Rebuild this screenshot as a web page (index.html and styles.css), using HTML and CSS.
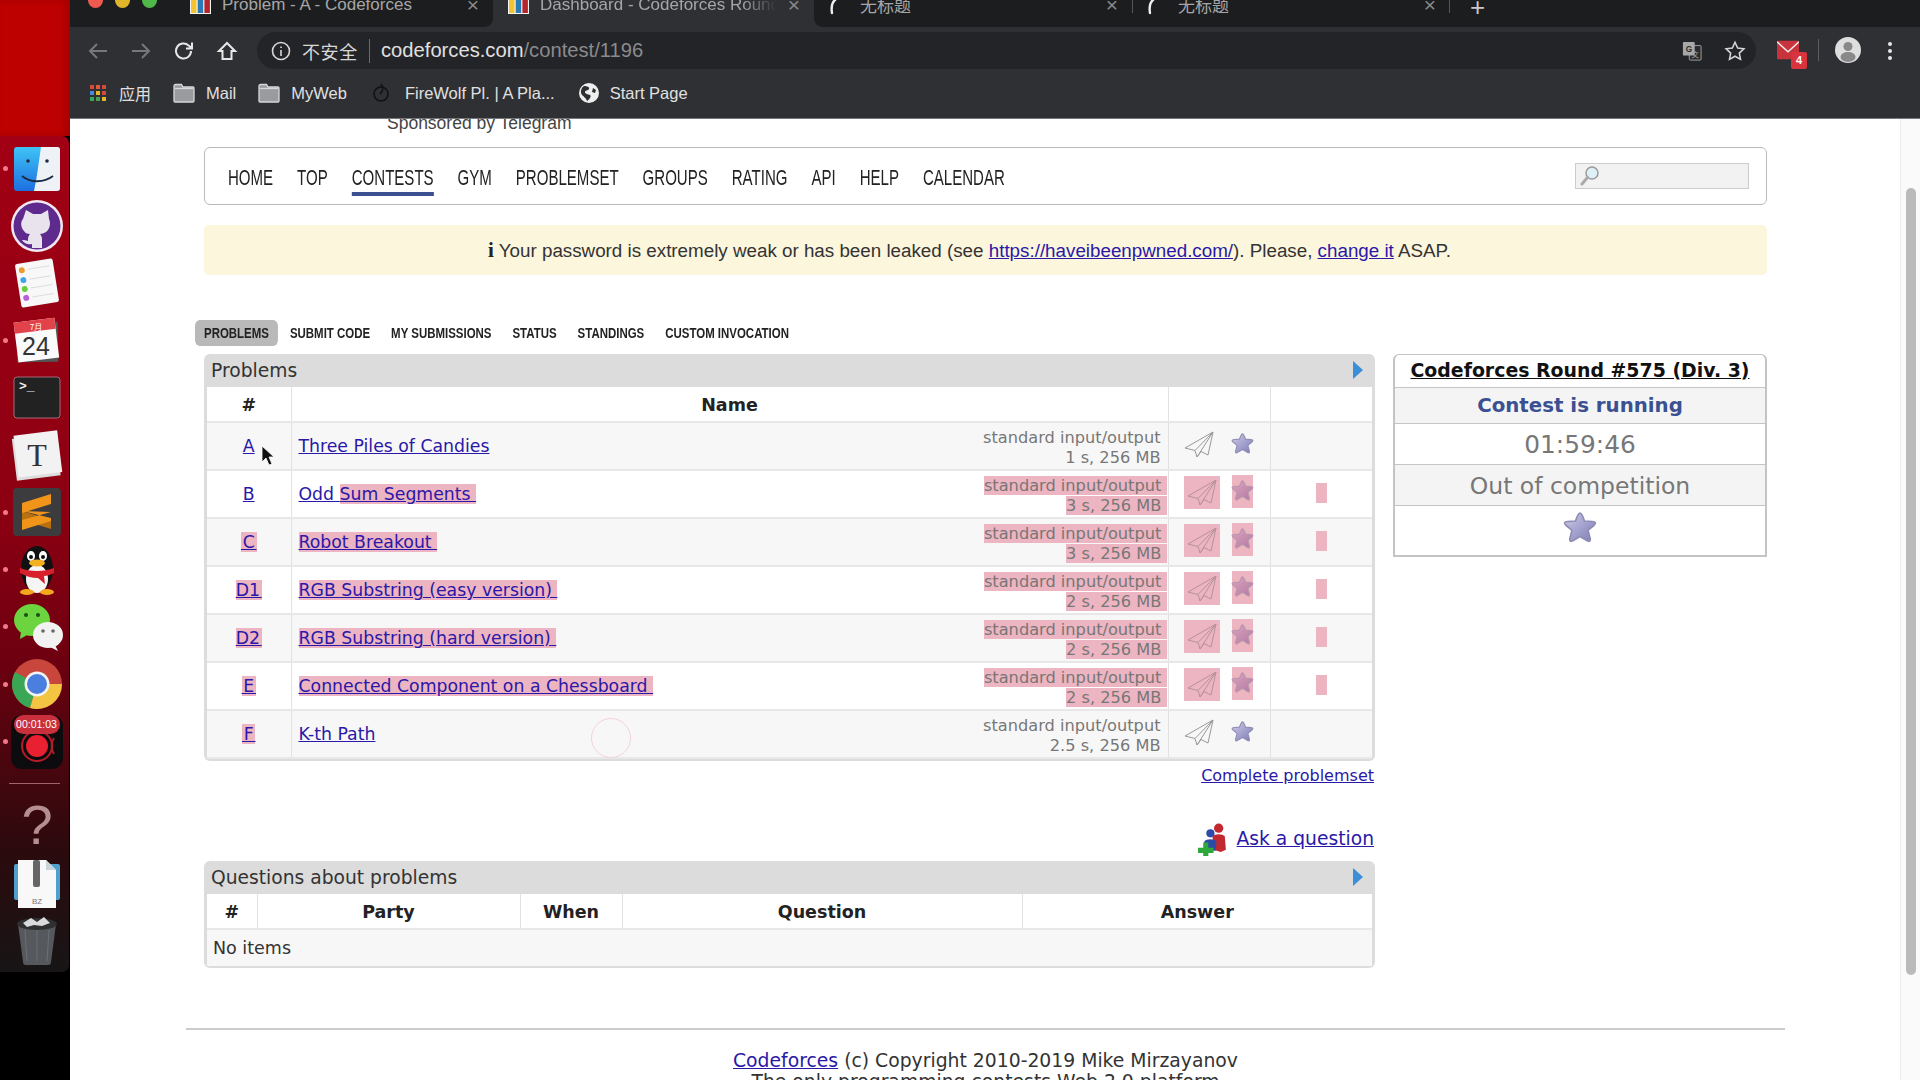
FILE: index.html
```html
<!DOCTYPE html>
<html lang="en">
<head>
<meta charset="utf-8">
<title>Dashboard - Codeforces Round #575 (Div. 3)</title>
<link rel="stylesheet" href="styles.css">
</head>
<body>
<svg class="defs" width="0" height="0" aria-hidden="true">
  <defs>
    <linearGradient id="starGrad" x1="0" y1="0" x2="1" y2="1"><stop offset="0" stop-color="#cfcde6"/><stop offset=".5" stop-color="#a5a3cf"/><stop offset="1" stop-color="#7f7cb4"/></linearGradient>
    <linearGradient id="starPink" x1="0" y1="0" x2="1" y2="1"><stop offset="0" stop-color="#dba6bf"/><stop offset=".5" stop-color="#c78fb0"/><stop offset="1" stop-color="#b07a9e"/></linearGradient>
    <linearGradient id="dockFinder" x1="0" y1="0" x2="0" y2="1"><stop offset="0" stop-color="#3fc4f5"/><stop offset="1" stop-color="#1c6fe0"/></linearGradient>
    <symbol id="star" viewBox="0 0 24 24"><path d="M12 2.500c.8 0 1.400 1 2.700 4.700l4.900.3c1.700.2 2.200 1 1 2.100l-3.800 3.200 1.300 4.900c.4 1.600-.4 2.200-1.800 1.300L12 16.500l-4.300 2.500c-1.400.9-2.200.3-1.800-1.300l1.300-4.900-3.800-3.200c-1.200-1.100-.7-1.900 1-2.100l4.900-.3C10.600 3.500 11.200 2.500 12 2.500z"/></symbol>
    <symbol id="plane" viewBox="0 0 30 27"><path d="M29 1 1 17l10 2.500L13 26l4-5.500 7 3.500zM29 1 11 19.500M29 1 13 26" fill="none" stroke="currentColor" stroke-width="1" stroke-linejoin="round"/></symbol>
    <symbol id="favicon" viewBox="0 0 21 24"><rect width="21" height="24" fill="#f4f4f4"/><rect x="1" y="8" width="5.500" height="15" fill="#f4c430"/><rect x="7.700" y="0" width="5.500" height="23" fill="#2a7ab8"/><rect x="14.400" y="4" width="5.500" height="19" fill="#b4252c"/></symbol>
    <symbol id="folder" viewBox="0 0 22 20"><path d="M1 3a1.500 1.500 0 0 1 1.500-1.500h6L10 4h10a1 1 0 0 1 1 1v13a1 1 0 0 1-1 1H2a1 1 0 0 1-1-1z" fill="#9a9b9e" stroke="#d7d7d9" stroke-width="1.300"/><path d="M2 5.500h18" stroke="#d7d7d9" stroke-width="1.300"/></symbol>
    <symbol id="spin" viewBox="0 0 20 20"><path d="M3 18C2 12 3 7 7 4" fill="none" stroke="#eee" stroke-width="2.400" stroke-linecap="round"/><circle cx="14" cy="3" r="1.400" fill="#eee"/></symbol>
  </defs>
</svg>

<div class="screen">
  <aside class="desk">
    <div class="desk-top"></div>
    <nav class="dock">
      <div class="dock-item"><svg class="dock-icon" viewBox="0 0 56 56"><rect x="5" y="6" width="46" height="44" rx="3" fill="url(#dockFinder)"/><path d="M32 6h16a3 3 0 0 1 3 3v38a3 3 0 0 1-3 3H25c3-14 5-30 7-44z" fill="#eef2f6"/><circle cx="19" cy="20" r="1.800" fill="#1d2b45"/><circle cx="38" cy="20" r="1.800" fill="#1d2b45"/><path d="M13 35c8 7 22 7 31 0" fill="none" stroke="#1d2b45" stroke-width="1.800"/></svg><span class="dot"></span></div>
      <div class="dock-item"><svg class="dock-icon" viewBox="0 0 56 56"><circle cx="28" cy="28" r="26" fill="#f1e8f2"/><circle cx="28" cy="28" r="23.500" fill="#5e2a8e"/><path d="M17 12l7 4h8l7-4 1 9c2 4 1 10-3 13-2 1-4 2-6 2 1 1 2 3 2 5v9h-10v-4c-5 1-8-1-10-4 2 0 4 0 6 1v-2c0-2 1-4 2-5-3 0-5-1-6-3-3-3-4-9-1-12z" fill="#e9e3ee"/></svg></div>
      <div class="dock-item"><svg class="dock-icon" viewBox="0 0 56 56"><g transform="rotate(-9 28 28)"><rect x="9" y="6" width="38" height="44" rx="2" fill="#f8f8f8"/><g stroke="#ddd"><path d="M21 13h22M21 23h22M21 32h22M21 41h22"/></g><circle cx="15" cy="13" r="3" fill="#ef9a2e"/><circle cx="15" cy="23" r="3" fill="#3ca7e8"/><circle cx="15" cy="32" r="3" fill="#65d03e"/><circle cx="15" cy="41" r="3" fill="#b65fd8"/></g></svg></div>
      <div class="dock-item"><svg class="dock-icon" viewBox="0 0 56 56"><g transform="rotate(-7 28 28)"><rect x="8" y="9" width="41" height="40" fill="#555" transform="rotate(6 28 28)"/><rect x="7" y="7" width="41" height="40" fill="#fafafa"/><rect x="7" y="7" width="41" height="11" fill="#e2434b"/></g><text x="27" y="17" class="cal-month">7月</text><text x="27" y="42" class="cal-day">24</text></svg><span class="dot"></span></div>
      <div class="dock-item"><svg class="dock-icon" viewBox="0 0 56 56"><rect x="5" y="7" width="46" height="41" rx="3" fill="#222" stroke="#a36a75"/><text x="10" y="20" class="term">&gt;_</text></svg></div>
      <div class="dock-item"><svg class="dock-icon" viewBox="0 0 56 56"><rect x="5" y="9" width="44" height="42" fill="#ddd" transform="rotate(-7 28 28)"/><rect x="7" y="6" width="44" height="42" fill="#f2f2f2" transform="rotate(-7 28 28)"/><text x="28" y="39" class="typora">T</text></svg></div>
      <div class="dock-item"><svg class="dock-icon" viewBox="0 0 56 56"><rect x="4" y="4" width="48" height="48" rx="4" fill="#3c3c3e"/><path d="M13 27l29 9v9L13 36z" fill="#b9700f"/><path d="M13 19 42 10v10L13 29z" fill="#f0941a"/><path d="M13 27l29 7v3L13 46V36l29-8z" fill="#f0941a"/></svg><span class="dot"></span></div>
      <div class="dock-item"><svg class="dock-icon" viewBox="0 0 56 56"><ellipse cx="28" cy="27" rx="16" ry="23" fill="#111"/><ellipse cx="28" cy="37" rx="11" ry="14" fill="#f5f5f5"/><ellipse cx="22" cy="14" rx="4" ry="5" fill="#fff"/><ellipse cx="34" cy="14" rx="4" ry="5" fill="#fff"/><circle cx="22" cy="15" r="2" fill="#111"/><circle cx="34" cy="15" r="2" fill="#111"/><ellipse cx="28" cy="21" rx="8" ry="3.500" fill="#f4b01e"/><path d="M11 26c10 4 24 4 34 0v5c-4 2-7 3-10 3l1 8-7-6c-6 0-13-2-18-5z" fill="#d8202c"/><ellipse cx="18" cy="50" rx="7" ry="3" fill="#f4a81e"/><ellipse cx="38" cy="50" rx="7" ry="3" fill="#f4a81e"/></svg><span class="dot"></span></div>
      <div class="dock-item"><svg class="dock-icon" viewBox="0 0 56 56"><ellipse cx="23" cy="21" rx="18" ry="16" fill="#6bd43e"/><path d="M12 32l-1 8 9-5z" fill="#6bd43e"/><circle cx="17" cy="16" r="2" fill="#17501a"/><circle cx="29" cy="16" r="2" fill="#17501a"/><ellipse cx="39" cy="36" rx="15" ry="13" fill="#f2f2f2"/><path d="M46 46l3 6-8-4z" fill="#f2f2f2"/><circle cx="34" cy="32" r="1.800" fill="#666"/><circle cx="44" cy="32" r="1.800" fill="#666"/></svg><span class="dot"></span></div>
      <div class="dock-item"><svg class="dock-icon" viewBox="0 0 56 56"><circle cx="28" cy="28" r="25" fill="#c9463d"/><path d="M28 28 6 16A25 25 0 0 0 21 52z" fill="#3aa757"/><path d="M28 28h25a25 25 0 0 1-32 24z" fill="#f4c542"/><circle cx="28" cy="28" r="12.500" fill="#f4f4f4"/><circle cx="28" cy="28" r="10" fill="#4a7fe0"/></svg><span class="dot"></span></div>
      <div class="dock-item"><div class="rec"><svg class="rec-art" viewBox="0 0 52 54"><rect width="52" height="54" rx="11" fill="#0c0c0e"/><circle cx="26" cy="31" r="11" fill="#e8202f"/><circle cx="26" cy="31" r="15" fill="none" stroke="#b51c28" stroke-width="2"/><path d="M43 23c-3 4-3 12 0 16" fill="none" stroke="#b51c28" stroke-width="2"/></svg><span class="rec-time">00:01:03</span></div><span class="dot"></span></div>
      <hr class="dock-sep">
      <div class="dock-item"><svg class="dock-icon" viewBox="0 0 56 56"><text x="28" y="47" class="help">?</text></svg></div>
      <div class="dock-item"><svg class="dock-icon low" viewBox="0 0 56 56"><rect x="5" y="6" width="46" height="36" rx="2" fill="#4f9fcf"/><path d="M9 2h28l10 10v38H9z" fill="#f8f8f8"/><path d="M37 2v10h10z" fill="#c9d3da"/><rect x="24" y="2" width="7" height="27" rx="2" fill="#666"/><text x="28" y="46" class="bz">BZ</text></svg></div>
      <div class="dock-item"><svg class="dock-icon" viewBox="0 0 56 56"><path d="M9 12h38l-5 38a3 3 0 0 1-3 3H17a3 3 0 0 1-3-3z" fill="#55585c"/><path d="M16 18l2 31M28 18v31M40 18l-2 31" stroke="#6d7074"/><ellipse cx="28" cy="12" rx="20" ry="6" fill="#2e3032"/><path d="M14 11l8-5 6 4 7-5 6 6-8 3-8-1-7 2z" fill="#d8dadc"/></svg></div>
    </nav>
    <div class="desk-bottom"></div>
  </aside>

  <div class="browser">
    <header class="chrome">
      <div class="tabbar">
        <div class="lights"><i class="light red"></i><i class="light yellow"></i><i class="light green"></i></div>
        <div class="tab"><svg class="fav"><use href="#favicon"/></svg><span class="tab-title">Problem - A - Codeforces</span><span class="tab-x">×</span></div>
        <div class="tab active"><svg class="fav"><use href="#favicon"/></svg><span class="tab-title fade">Dashboard - Codeforces Round</span><span class="tab-x">×</span></div>
        <div class="tab"><svg class="fav spinner"><use href="#spin"/></svg><span class="tab-title cjk">无标题</span><span class="tab-x">×</span></div>
        <div class="tab sep"><svg class="fav spinner"><use href="#spin"/></svg><span class="tab-title cjk">无标题</span><span class="tab-x">×</span></div>
        <span class="tab-plus">+</span>
      </div>
      <div class="toolbar">
        <div class="nav-btns">
          <svg class="tool dim" viewBox="0 0 24 24"><path d="M21 12H4M11 5l-7 7 7 7"/></svg>
          <svg class="tool dim" viewBox="0 0 24 24"><path d="M3 12h17M13 5l7 7-7 7"/></svg>
          <svg class="tool" viewBox="0 0 24 24"><path d="M19 12a7.500 7.500 0 1 1-2.300-5.400L20 9.500M20 3.500v6h-6"/></svg>
          <svg class="tool" viewBox="0 0 24 24"><path d="M12 4 4 12h3.500v8h9v-8H20z"/></svg>
        </div>
        <div class="omnibox">
          <svg class="info" viewBox="0 0 20 20"><circle cx="10" cy="10" r="8.500"/><path d="M10 9v6M10 5.500v1.500"/></svg>
          <span class="insecure cjk">不安全</span>
          <span class="url"><b>codeforces.com</b>/contest/1196</span>
          <svg class="translate" viewBox="0 0 22 22"><rect x="8" y="5" width="13" height="16" rx="1" fill="#2a2b2e" stroke="#a8a8a8"/><rect x="1" y="1" width="13" height="15" rx="1" fill="#a8a8a8"/><text x="7.500" y="12" class="gt">G</text><text x="14.500" y="18" class="gt2">文</text></svg>
          <svg class="ostar" viewBox="0 0 24 24"><path d="M12 2.500l2.900 6.300 6.800.8-5 4.700 1.300 6.800-6-3.400-6 3.400 1.300-6.800-5-4.700 6.800-.8z"/></svg>
        </div>
        <div class="ext">
          <svg class="gmail" viewBox="0 0 24 20"><rect width="24" height="20" rx="1" fill="#c9333b"/><path d="M0 1l12 11L24 1" fill="none" stroke="#eee" stroke-width="1.600"/></svg>
          <span class="ext-badge">4</span>
        </div>
        <span class="ext-sep"></span>
        <svg class="avatar" viewBox="0 0 26 26"><circle cx="13" cy="13" r="13" fill="#dedede"/><circle cx="13" cy="9.500" r="4.500" fill="#888"/><ellipse cx="13" cy="20" rx="7.500" ry="5" fill="#888"/></svg>
        <span class="kebab"><i></i><i></i><i></i></span>
      </div>
      <div class="bookmarks">
        <span class="apps"><i class="c1"></i><i class="c2"></i><i class="c3"></i><i class="c4"></i><i class="c5"></i><i class="c6"></i><i class="c7"></i><i class="c8"></i><i class="c9"></i></span>
        <span class="bm cjk bm-apps">应用</span>
        <svg class="bm-folder"><use href="#folder"/></svg><span class="bm">Mail</span>
        <svg class="bm-folder"><use href="#folder"/></svg><span class="bm">MyWeb</span>
        <svg class="bm-wolf" viewBox="0 0 16 20"><circle cx="8" cy="11" r="7" fill="none" stroke="#111" stroke-width="1.600"/><path d="M8 1c3 3 2 7-1 10" fill="none" stroke="#111" stroke-width="1.600"/></svg><span class="bm">FireWolf Pl. | A Pla...</span>
        <svg class="bm-globe" viewBox="0 0 20 20"><circle cx="10" cy="10" r="10" fill="#eee"/><path d="M5 3c3 0 6 1 5 3S6 7 6 9s3 2 5 3-1 5-3 6c-1-3-3-4-5-6C1 9 2 5 5 3zM14 5l3 2-1 3-3-1z" fill="#2e2f33"/></svg><span class="bm">Start Page</span>
      </div>
    </header>

    <div class="viewport">
      <main class="content">
        <div class="site">
          <div class="sponsor">Sponsored by Telegram</div>
          <div class="menu">
            <div class="menu-links">
              <a class="menu-item">HOME</a><a class="menu-item">TOP</a><a class="menu-item current">CONTESTS</a><a class="menu-item">GYM</a><a class="menu-item">PROBLEMSET</a><a class="menu-item">GROUPS</a><a class="menu-item">RATING</a><a class="menu-item">API</a><a class="menu-item">HELP</a><a class="menu-item">CALENDAR</a>
            </div>
            <div class="search"><svg class="lens" viewBox="0 0 20 22"><circle cx="12" cy="8" r="6" fill="#dff1f8" stroke="#9a9a9a" stroke-width="1.500"/><path d="M7.500 12.500 2 19" stroke="#aaa" stroke-width="3" stroke-linecap="round"/></svg></div>
          </div>
          <div class="alert"><b class="alert-i">i</b> Your password is extremely weak or has been leaked (see <a class="link">https://haveibeenpwned.com/</a>). Please, <a class="link">change it</a> ASAP.</div>
          <div class="subnav">
            <a class="sub current">PROBLEMS</a><a class="sub">SUBMIT CODE</a><a class="sub">MY SUBMISSIONS</a><a class="sub">STATUS</a><a class="sub">STANDINGS</a><a class="sub">CUSTOM INVOCATION</a>
          </div>

          <div class="columns">
            <section class="left">
              <div class="panel">
                <div class="panel-head">Problems<span class="tri"></span></div>
                <table class="grid">
                  <colgroup><col class="p1"><col class="p2"><col class="p3"><col class="p4"></colgroup>
                  <thead><tr><th>#</th><th>Name</th><th></th><th></th></tr></thead>
                  <tbody>
                    <tr><td class="idx"><a class="link">A</a></td><td><div class="name"><a class="link">Three Piles of Candies</a><div class="limits"><span>standard input/output</span><span>1 s, 256 MB</span></div></div></td><td><div class="acts"><span class="act-plane"><svg class="plane"><use href="#plane"/></svg></span><span class="act-star"><svg class="star"><use href="#star"/></svg></span></div></td><td></td></tr>
                    <tr><td class="idx"><a class="link">B</a></td><td><div class="name"><a class="link">Odd <mark>Sum Segments&nbsp;</mark></a><div class="limits on"><span><mark>standard input/output&nbsp;</mark></span><span><mark>3 s, 256 MB&nbsp;</mark></span></div></div></td><td><div class="acts on"><span class="act-plane"><svg class="plane"><use href="#plane"/></svg></span><span class="act-star"><svg class="star"><use href="#star"/></svg></span></div></td><td class="bar-cell"><span class="bar"></span></td></tr>
                    <tr><td class="idx"><a class="link"><mark>&hairsp;C&hairsp;</mark></a></td><td><div class="name"><a class="link"><mark>Robot Breakout&nbsp;</mark></a><div class="limits on"><span><mark>standard input/output&nbsp;</mark></span><span><mark>3 s, 256 MB&nbsp;</mark></span></div></div></td><td><div class="acts on"><span class="act-plane"><svg class="plane"><use href="#plane"/></svg></span><span class="act-star"><svg class="star"><use href="#star"/></svg></span></div></td><td class="bar-cell"><span class="bar"></span></td></tr>
                    <tr><td class="idx"><a class="link"><mark>D1&hairsp;</mark></a></td><td><div class="name"><a class="link"><mark>RGB Substring (easy version)&nbsp;</mark></a><div class="limits on"><span><mark>standard input/output&nbsp;</mark></span><span><mark>2 s, 256 MB&nbsp;</mark></span></div></div></td><td><div class="acts on"><span class="act-plane"><svg class="plane"><use href="#plane"/></svg></span><span class="act-star"><svg class="star"><use href="#star"/></svg></span></div></td><td class="bar-cell"><span class="bar"></span></td></tr>
                    <tr><td class="idx"><a class="link"><mark>D2&hairsp;</mark></a></td><td><div class="name"><a class="link"><mark>RGB Substring (hard version)&nbsp;</mark></a><div class="limits on"><span><mark>standard input/output&nbsp;</mark></span><span><mark>2 s, 256 MB&nbsp;</mark></span></div></div></td><td><div class="acts on"><span class="act-plane"><svg class="plane"><use href="#plane"/></svg></span><span class="act-star"><svg class="star"><use href="#star"/></svg></span></div></td><td class="bar-cell"><span class="bar"></span></td></tr>
                    <tr><td class="idx"><a class="link"><mark>&hairsp;E&hairsp;</mark></a></td><td><div class="name"><a class="link"><mark>Connected Component on a Chessboard&nbsp;</mark></a><div class="limits on"><span><mark>standard input/output&nbsp;</mark></span><span><mark>2 s, 256 MB&nbsp;</mark></span></div></div></td><td><div class="acts on"><span class="act-plane"><svg class="plane"><use href="#plane"/></svg></span><span class="act-star"><svg class="star"><use href="#star"/></svg></span></div></td><td class="bar-cell"><span class="bar"></span></td></tr>
                    <tr><td class="idx"><a class="link"><mark>&hairsp;F&hairsp;</mark></a></td><td><div class="name"><a class="link">K-th Path</a><div class="limits"><span>standard input/output</span><span>2.5 s, 256 MB</span></div></div></td><td><div class="acts"><span class="act-plane"><svg class="plane"><use href="#plane"/></svg></span><span class="act-star"><svg class="star"><use href="#star"/></svg></span></div></td><td></td></tr>
                  </tbody>
                </table>
              </div>
              <div class="complete"><a class="link">Complete problemset</a></div>
              <div class="ask">
                <svg class="ask-icon" viewBox="0 0 32 34"><circle cx="21" cy="7" r="4.500" fill="#c2282f"/><path d="M15 15c2-3 10-3 12 0l1 13-5 2-7-2z" fill="#c2282f"/><circle cx="13" cy="12" r="4" fill="#2c4aa8"/><path d="M7 20c2-3 10-3 12 0l-1 9H8z" fill="#2c4aa8"/><path d="M6 21h5v5h5v5h-5v3H6v-3H1v-5h5z" fill="#2ea83a"/></svg>
                <a class="link">Ask a question</a>
              </div>
              <div class="panel">
                <div class="panel-head">Questions about problems<span class="tri"></span></div>
                <table class="grid q">
                  <colgroup><col class="q1"><col class="q2"><col class="q3"><col class="q4"><col class="q5"></colgroup>
                  <thead><tr><th>#</th><th>Party</th><th>When</th><th>Question</th><th>Answer</th></tr></thead>
                  <tbody><tr><td colspan="5" class="none">No items</td></tr></tbody>
                </table>
              </div>
            </section>

            <aside class="right">
              <div class="r-title"><a class="r-link">Codeforces Round #575 (Div. 3)</a></div>
              <div class="r-state">Contest is running</div>
              <div class="r-time">01:59:46</div>
              <div class="r-out">Out of competition</div>
              <div class="r-star"><svg class="star big"><use href="#star"/></svg></div>
            </aside>
          </div>

          <span class="ring"></span>
          <svg class="cursor" viewBox="0 0 14 22"><path d="M1 1v16l4-4 3 7 3-1-3-7h5z" fill="#111" stroke="#fff" stroke-width=".8"/></svg>
        </div>
        <footer class="foot">
          <a class="link">Codeforces</a> (c) Copyright 2010-2019 Mike Mirzayanov<br>
          The only programming contests Web 2.0 platform
        </footer>
      </main>
      <div class="scrollbar"><div class="thumb"></div></div>
    </div>
  </div>
</div>
</body>
</html>
```

FILE: styles.css
```css
* { box-sizing: border-box; }
html, body { margin: 0; height: 100%; overflow: hidden; background: #000; }
.defs { position: absolute; }
.cjk { font-family: "Noto Sans CJK SC", "Liberation Sans", sans-serif; }
.screen { display: flex; width: 1920px; height: 1080px; overflow: hidden; }

/* desktop + dock */
.desk { width: 70px; flex: none; display: flex; flex-direction: column; background: #000; }
.desk-top { height: 136px; background: #bd0000; box-shadow: inset -4px 0 6px #a00000; }
.dock { height: 836px; width: 69px; padding-top: 4px; border-radius: 0 7px 7px 0; background: linear-gradient(#a20014 0%, #8c0012 45%, #6f0010 62%, #2c0a0d 85%, #171516 100%); display: flex; flex-direction: column; align-items: center; }
.desk-bottom { flex: 1; background: #000; }
.dock-item { position: relative; width: 69px; height: 57.300px; flex: none; display: flex; align-items: center; justify-content: center; padding-left: 4px; }
.dock-icon { width: 56px; height: 56px; flex: none; }
.dock-icon.low { margin-top: 8px; }
.dot { position: absolute; left: 3px; top: 26px; width: 5px; height: 5px; border-radius: 50%; background: #f0788a; }
.dock-sep { width: 51px; height: 1px; margin: 13px 0 12px; border: 0; background: #a0656b; flex: none; }
.rec { position: relative; width: 52px; height: 54px; }
.rec-art { display: block; width: 52px; height: 54px; }
.rec-time { position: absolute; left: 3px; right: 3px; top: 0; height: 19px; border-radius: 10px; background: #c9303c; color: #fff; font: 10.500px/19px "Liberation Sans", sans-serif; text-align: center; }
.cal-month { font: 8px "Noto Sans CJK SC", sans-serif; fill: #fff; text-anchor: middle; }
.cal-day { font: 25px "Liberation Sans", sans-serif; fill: #333; text-anchor: middle; }
.term { font: bold 13px "Liberation Mono", monospace; fill: #eee; }
.typora { font: 32px "Liberation Serif", serif; fill: #333; text-anchor: middle; }
.help { font: 56px "Liberation Sans", sans-serif; fill: #b58f90; text-anchor: middle; }
.bz { font: 8px "Liberation Sans", sans-serif; fill: #777; text-anchor: middle; }

/* browser chrome */
.browser { flex: 1; min-width: 0; display: flex; flex-direction: column; background: #fff; }
.chrome { height: 119px; flex: none; background: #2f3034; border-bottom: 1px solid #77787b; color: #dcdcdc; font-family: "Liberation Sans", sans-serif; }
.tabbar { height: 27px; display: flex; background: #1c1d1f; overflow: hidden; }
.lights { width: 105px; display: flex; gap: 12px; padding-left: 18px; flex: none; }
.light { width: 15px; height: 15px; margin-top: -7px; border-radius: 50%; }
.red { background: #ee5a52; } .yellow { background: #e0b52a; } .green { background: #4fb848; }
.tab { position: relative; width: 318px; flex: none; display: flex; align-items: flex-start; padding: 0 12px 0 15px; color: #a6a6a8; font-size: 17px; }
.tab.sep::before, .tab.sep::after { content: ""; position: absolute; top: 0; width: 1px; height: 13px; background: #55565a; }
.tab.sep::before { left: 0; } .tab.sep::after { right: 0; }
.tab.active { background: #2f3034; width: 321px; }
.tab.active::before, .tab.active::after { content: ""; position: absolute; bottom: 0; width: 8px; height: 8px; }
.tab.active::before { left: -8px; background: radial-gradient(circle at 0 0, transparent 7.500px, #2f3034 8px); }
.tab.active::after { right: -8px; background: radial-gradient(circle at 100% 0, transparent 7.500px, #2f3034 8px); }
.fav { width: 21px; height: 24px; margin-top: -10px; flex: none; }
.fav.spinner { width: 20px; height: 20px; margin-top: -5px; }
.tab-title { flex: 1; min-width: 0; margin: -4px 0 0 11px; line-height: 18px; white-space: nowrap; overflow: hidden; }
.fade { -webkit-mask-image: linear-gradient(90deg, #000 82%, transparent 96%); mask-image: linear-gradient(90deg, #000 82%, transparent 96%); }
.tab-x { margin-top: -6px; width: 16px; line-height: 22px; font-size: 21px; text-align: center; color: #8a8a8c; }
.tab-plus { margin: -7px 0 0 20px; font-size: 26px; line-height: 28px; color: #c8c8c8; }

.toolbar { height: 48px; display: flex; align-items: flex-start; padding: 5px 0 0 16px; }
.nav-btns { display: flex; gap: 19px; padding-top: 7px; flex: none; }
.tool { width: 24px; height: 24px; fill: none; stroke: #e8e8e8; stroke-width: 2; }
.tool.dim { stroke: #77787b; }
.omnibox { width: 1499px; height: 37px; margin-left: 18px; padding: 0 10px 0 14px; flex: none; display: flex; align-items: center; border-radius: 19px; background: #232427; }
.info { width: 20px; height: 20px; margin-right: 11px; flex: none; fill: none; stroke: #d8d8d8; stroke-width: 1.600; }
.insecure { font-size: 18px; letter-spacing: .6px; color: #d8d8d8; width: 68px; height: 24px; line-height: 24px; border-right: 1px solid #6a6b6e; }
.url { margin-left: 11px; font-size: 20.200px; color: #8a8b8e; }
.url b { font-weight: 400; color: #e0e0e0; }
.translate { width: 20px; height: 20px; margin-left: auto; flex: none; }
.gt { font: bold 9px "Liberation Sans", sans-serif; fill: #2a2b2e; text-anchor: middle; }
.gt2 { font: 8px "Noto Sans CJK SC", sans-serif; fill: #a8a8a8; text-anchor: middle; }
.ostar { width: 22px; height: 22px; margin: 0 0 0 22px; fill: none; stroke: #d6d6d6; stroke-width: 1.700; flex: none; }
.ext { position: relative; width: 30px; margin: 8px 0 0 21px; flex: none; }
.gmail { display: block; width: 22px; height: 20px; }
.ext-badge { position: absolute; left: 14px; top: 12px; width: 16px; height: 17px; border-radius: 2px; background: #d9343d; color: #fff; font: bold 11px/17px "Liberation Sans", sans-serif; text-align: center; }
.ext-sep { width: 1px; height: 22px; margin: 7px 0 0 11px; background: #5c5d60; flex: none; }
.avatar { width: 26px; height: 26px; margin: 5px 0 0 16px; flex: none; }
.kebab { display: flex; flex-direction: column; gap: 3px; margin: 10px 0 0 27px; }
.kebab i { width: 4px; height: 4px; border-radius: 50%; background: #e6e6e6; }

.bookmarks { height: 43px; display: flex; align-items: center; padding: 0 0 7px 20px; }
.apps { display: grid; grid-template-columns: repeat(3, 4px); grid-auto-rows: 4px; gap: 2px; width: 16px; flex: none; }
.apps i { display: block; } .c1,.c3 { background: #d9483b; } .c2 { background: #e05a3a; } .c4 { background: #4a88e0; } .c5 { background: #e8b52a; } .c6 { background: #d9483b; } .c7 { background: #3aa757; } .c8 { background: #4a9f54; } .c9 { background: #e8b52a; }
.bm { font-size: 16.500px; color: #e0e0e0; white-space: nowrap; }
.bm-apps { margin-left: 13px; font-size: 16px; }
.bm-folder { width: 22px; height: 20px; margin-left: 22px; margin-right: 11px; flex: none; }
.bm-wolf { width: 16px; height: 20px; margin-left: 26px; margin-right: 16px; flex: none; }
.bm-globe { width: 20px; height: 20px; margin-left: 24px; margin-right: 11px; flex: none; }

/* page */
.viewport { flex: 1; min-height: 0; display: flex; }
.content { flex: 1; min-width: 0; overflow: hidden; background: #fff; font-family: "DejaVu Sans", Verdana, sans-serif; color: #333; }
.scrollbar { width: 20px; flex: none; padding: 69px 4px 0 5px; background: #fafafa; border-left: 1px solid #ececec; }
.thumb { height: 787px; border-radius: 6px; background: #bababa; }
.site { position: relative; width: 1563px; margin-left: 134px; }
.sponsor { height: 33px; margin: -5px 0 0 183px; font: 17.500px/18px "Liberation Sans", sans-serif; color: #444; }
.menu { height: 58px; display: flex; align-items: flex-start; padding: 0 17px 0 23px; border: 1.500px solid #bbb; border-radius: 6px; }
.menu-links { display: flex; gap: 35px; flex: none; transform: scaleX(.684); transform-origin: left top; }
.menu-item { margin-top: 16px; height: 31.500px; font: 22px/28px "Liberation Sans", sans-serif; color: #222; white-space: nowrap; }
.menu-item.current { border-bottom: 4px solid #3b5091; }
.search { width: 174px; height: 26px; margin: 15px 0 0 auto; background: #f2f2f2; border: 1px solid #ccc; }
.lens { display: block; width: 20px; height: 24px; margin-left: 4px; }
.alert { height: 50px; margin-top: 20px; padding-right: 32px; border-radius: 5px; background: #fcf6dd; text-align: center; font: 18.800px/50px "Liberation Sans", sans-serif; color: #333; }
.alert-i { font-family: "Liberation Serif", serif; font-size: 21px; color: #222; }
.link { color: #2a18a8; text-decoration: underline; }
.subnav { display: flex; gap: 26.600px; margin: 45px 0 8px -9px; height: 26px; transform: scaleX(.79); transform-origin: left top; }
.sub { height: 26px; font: bold 14.500px/26px "Liberation Sans", sans-serif; color: #222; white-space: nowrap; }
.sub.current { padding: 0 11.400px; margin-right: -11.400px; border-radius: 6px; background: #b9b9b9; }
.columns { display: flex; gap: 18px; align-items: flex-start; }
.left { width: 1171px; flex: none; }
.panel { padding: 0 3px 2px; border-radius: 6px; background: #dcdcdc; }
.panel-head { position: relative; height: 33px; padding-left: 4px; font-size: 18.700px; line-height: 33px; color: #333; }
.tri { position: absolute; right: 9px; top: 7px; width: 0; height: 0; border-left: 10px solid #3b8fd8; border-top: 9px solid transparent; border-bottom: 9px solid transparent; }
.grid { width: 1165px; table-layout: fixed; border-collapse: collapse; background: #fff; font-size: 17.300px; }
.grid th { height: 35px; padding: 1px 0 0; font-size: 17.500px; font-weight: 700; color: #222; background: #fff; border-right: 1px solid #e2e2e2; border-bottom: 2px solid #e8e8e8; }
.grid td { height: 48px; padding: 0; border-right: 1px solid #e2e2e2; border-bottom: 2px solid #e8e8e8; }
.grid th:last-child, .grid td:last-child { border-right: 0; }
.grid tbody tr:nth-child(odd) td { background: #f7f7f7; }
.p1 { width: 84px; } .p2 { width: 877px; } .p3 { width: 102px; } .p4 { width: 102px; }
.q1 { width: 50px; } .q2 { width: 263px; } .q3 { width: 102px; } .q4 { width: 400px; } .q5 { width: 350px; }
.grid td.none { height: 37px; padding-left: 6px; font-size: 17.500px; color: #333; border-bottom: 0; }
.idx { text-align: center; }
mark { background: #edb4c1; color: inherit; }
.name { display: flex; align-items: center; justify-content: space-between; padding: 0 0 0 7px; }
.limits { display: flex; flex-direction: column; align-items: flex-end; padding: 4px 7px 0 0; font-size: 16.200px; line-height: 20px; color: #777; }
.limits.on { padding-right: 1px; }
.acts { display: flex; align-items: center; padding: 0 0 4px 15px; }
.act-plane { display: flex; align-items: center; justify-content: center; width: 36px; height: 33px; color: #999; }
.acts:not(.on) .plane { margin-left: -5px; }
.act-star { display: flex; align-items: center; justify-content: center; width: 21px; height: 33px; margin-left: 12px; }
.acts.on .act-plane { background: #edb4c1; color: #b5929c; }
.acts.on .act-star { background: #edb4c1; margin-top: -2px; }
.plane { width: 30px; height: 27px; flex: none; }
.star { width: 27px; height: 27px; flex: none; fill: url(#starGrad); stroke: #8f8db5; stroke-width: 1; stroke-linejoin: round; }
.acts.on .star { fill: url(#starPink); stroke: #b797ac; }
.star.big { width: 40px; height: 40px; margin-top: -4px; }
.bar-cell { text-align: center; padding-left: 1px; }
.bar { display: inline-block; width: 11px; height: 20px; margin-bottom: 3px; vertical-align: middle; background: #edb4c1; }
.complete { height: 20px; margin-top: 5px; padding-right: 1px; text-align: right; font-size: 16px; line-height: 20px; }
.ask { display: flex; align-items: center; justify-content: flex-end; height: 34px; margin: 35px 0 6px; padding-right: 1px; font-size: 18.700px; }
.ask-icon { width: 33px; height: 35px; margin-right: 7px; flex: none; }
.right { width: 374px; flex: none; border: 2px solid #c4c4c4; border-top-width: 1.500px; border-radius: 6px 6px 0 0; text-align: center; }
.r-title { height: 33px; font-weight: 700; font-size: 18.900px; line-height: 31px; border-bottom: 1px solid #c4c4c4; }
.r-link { color: #111; text-decoration: underline; }
.r-state { height: 36px; font-weight: 700; font-size: 19.800px; line-height: 36px; color: #3b5091; background: #f4f4f4; border-bottom: 1px solid #c4c4c4; }
.r-time { height: 41px; font-size: 24.800px; line-height: 42px; color: #777; border-bottom: 1px solid #c4c4c4; }
.r-out { height: 41px; font-size: 23.500px; line-height: 42px; color: #777; background: #f4f4f4; border-bottom: 1px solid #c4c4c4; }
.r-star { height: 49px; display: flex; align-items: center; justify-content: center; }
.ring { position: absolute; left: 387px; top: 604px; width: 40px; height: 40px; border-radius: 50%; border: 1.500px solid #f4d3d7; }
.cursor { position: absolute; left: 57px; top: 331px; width: 14px; height: 22px; }
.foot { margin: 60px 0 0 116px; width: 1599px; padding-top: 20px; border-top: 2px solid #ccc; text-align: center; font-size: 18.800px; line-height: 21px; color: #333; }
```
